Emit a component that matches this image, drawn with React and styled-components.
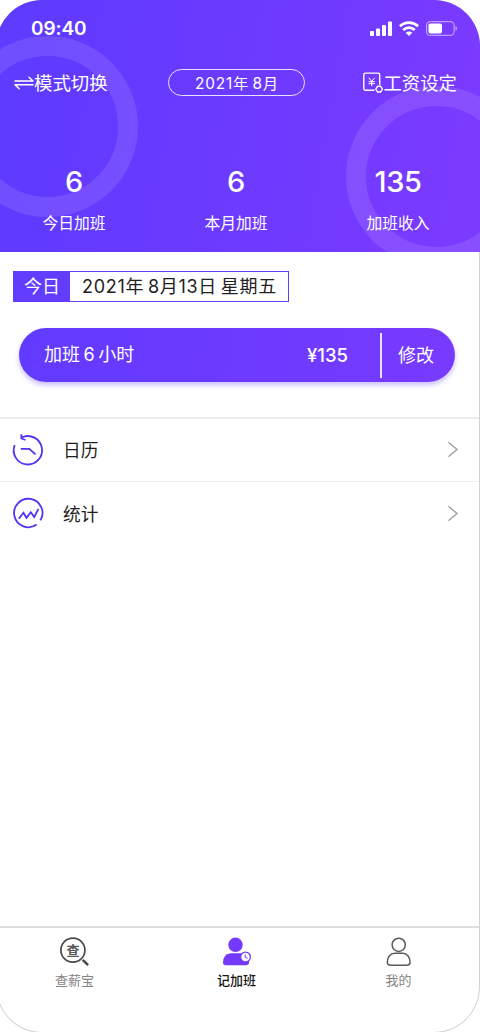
import React from "react";
import styled, { createGlobalStyle } from "styled-components";

const Global = createGlobalStyle`
  * { box-sizing: border-box; }
  body { margin: 0; background: #fff; overflow: hidden; font-family: Inter, "Noto Sans CJK SC", sans-serif; }
  svg { display: block; flex: none; overflow: visible; }
`;
const Phone = styled.main`
  width: 484px;
  height: 1033px;
  margin-left: -4px;
  padding: 0 1px 0 4px;
  border-radius: 46px;
  overflow: hidden;
  display: flex;
  flex-direction: column;
  background: #fff;
  box-shadow: inset 0 0 0 1px #d4d4d6;
`;
const Header = styled.header`
  position: relative;
  height: 252px;
  margin: 0 -1px 0 -4px;
  padding: 0 1px 0 4px;
  background: linear-gradient(100deg, #5f3aff 8%, #7a3aff 92%);
  color: #fff;
  overflow: hidden;
  flex: none;
`;
const Ring = styled.i`
  position: absolute;
  left: ${(p) => p.$x}px;
  top: ${(p) => p.$y}px;
  width: 181px;
  height: 181px;
  border: 20px solid rgba(255, 255, 255, 0.11);
  border-radius: 50%;
`;
const StatusBar = styled.div`
  position: relative;
  height: 57px;
  padding: 1px 21px 0 31px;
  display: flex;
  align-items: center;
  justify-content: space-between;
`;
const Clock = styled.span`
  font-size: 19px;
  line-height: 24px;
  font-weight: 600;
  letter-spacing: -0.1px;
`;
const Signals = styled.div`
  display: flex;
  align-items: center;
  gap: 7px;
  padding-bottom: 2px;
`;
const Tools = styled.div`
  position: relative;
  height: 51px;
  padding: 0 22px 0 14px;
  display: grid;
  grid-template-columns: 154px 137px 1fr;
  align-items: center;
`;
const Action = styled.div`
  display: flex;
  align-items: center;
  justify-content: ${(p) => (p.$end ? "flex-end" : "flex-start")};
  font-size: 18.4px;
  line-height: 26px;
  font-weight: 400;
  white-space: nowrap;
`;
const Month = styled.div`
  height: 27px;
  border: 1px solid rgba(255, 255, 255, 0.85);
  border-radius: 14px;
  display: flex;
  align-items: center;
  justify-content: center;
  padding: 0 0 1px 1px;
  font-size: 15.3px;
  letter-spacing: 0.9px;
  word-spacing: -2px;
  white-space: nowrap;
`;
const Stats = styled.div`
  position: relative;
  display: grid;
  grid-template-columns: repeat(3, 162px);
  margin-left: -7px;
  padding-top: 56px;
`;
const Stat = styled.div`
  text-align: center;
`;
const Value = styled.div`
  font-size: 29px;
  line-height: 36px;
  font-weight: 500;
  letter-spacing: -0.4px;
`;
const Label = styled.div`
  margin-top: 12px;
  font-size: 15.8px;
  line-height: 24px;
`;
const Today = styled.div`
  align-self: flex-start;
  width: 276px;
  height: 31px;
  margin: 19px 0 0 13px;
  border: 1.5px solid #623cff;
  display: flex;
  font-size: 18px;
  line-height: 30px;
  white-space: nowrap;
`;
const TodayTag = styled.span`
  width: 56px;
  background: #623cff;
  color: #fff;
  text-align: center;
`;
const TodayDate = styled.span`
  flex: 1;
  color: #222;
  padding-left: 12px;
  letter-spacing: 0.7px;
  word-spacing: -2px;
`;
const Record = styled.section`
  height: 54px;
  width: 436px;
  margin: 26px 0 35px 19px;
  border-radius: 27px;
  background: linear-gradient(100deg, #623aff, #783aff);
  box-shadow: 0 3px 5px rgba(98, 70, 255, 0.35);
  color: #fff;
  display: flex;
  align-items: center;
  font-size: 18px;
  line-height: 26px;
  white-space: nowrap;
  flex: none;
`;
const Hours = styled.span`
  width: 288px;
  padding-left: 25px;
  word-spacing: -1.5px;
`;
const Amount = styled.span`
  width: 73px;
  padding-bottom: 1px;
  font-size: 18.5px;
  font-weight: 500;
`;
const Edit = styled.span`
  height: 45px;
  border-left: 2px solid rgba(255, 255, 255, 0.85);
  padding-left: 16px;
  line-height: 45px;
`;
const Row = styled.div`
  height: 64px;
  padding: 0 21px 0 12px;
  border-top: ${(p) => (p.$first ? "2px solid #ececee" : "1px solid #eeeef0")};
  display: flex;
  align-items: center;
  flex: none;
`;
const RowTitle = styled.span`
  flex: 1;
  margin: 2px 0 0 19px;
  font-size: 17.7px;
  line-height: 26px;
  color: #1e1e1e;
`;
const TabBar = styled.nav`
  height: 107px;
  margin-top: auto;
  border-top: 2px solid #dedee0;
  display: grid;
  grid-template-columns: repeat(3, 162px);
  margin-left: -6.5px;
  flex: none;
`;
const Tab = styled.div`
  display: flex;
  flex-direction: column;
  align-items: center;
  padding-top: 8px;
  font-size: 13px;
  line-height: 20px;
  font-weight: ${(p) => (p.$active ? 500 : 400)};
  color: ${(p) => (p.$active ? "#161616" : "#858585")};
`;
const TabLabel = styled.span`
  margin-top: 2px;
`;

const stroke = { fill: "none", stroke: "currentColor", strokeLinecap: "round", strokeLinejoin: "round" };

const Signal = () => (
  <svg width="22" height="15" viewBox="0 0 22 15" fill="#fff">
    <rect x="0" y="10" width="4" height="5" rx="1" />
    <rect x="6" y="7.5" width="4" height="7.5" rx="1" />
    <rect x="12" y="4" width="4" height="11" rx="1" />
    <rect x="18" y="0.5" width="4" height="14.5" rx="1" />
  </svg>
);
const Wifi = () => (
  <svg width="20" height="15" viewBox="0 0 20 15" fill="none" stroke="#fff" strokeWidth="2.9">
    <path d="M1 5.2C6.2.4 13.8.4 19 5.2" />
    <path d="M4.2 9c3.5-3 8.1-3 11.6 0" />
    <path d="M6.7 11.7c2-1.6 4.6-1.6 6.6 0L10 15Z" fill="#fff" stroke="none" />
  </svg>
);
const Battery = () => (
  <svg width="32" height="15" viewBox="0 0 32 15">
    <rect x=".6" y=".6" width="27.5" height="13.8" rx="3.7" fill="none" stroke="#fff" strokeOpacity=".5" strokeWidth="1.2" />
    <rect x="2.5" y="2.5" width="13.5" height="10" rx="1.8" fill="#fff" />
    <path d="M29.5 5v5q1.5-.8 1.5-2.5T29.5 5Z" fill="#fff" fillOpacity=".55" />
  </svg>
);
const Swap = () => (
  <svg width="20" height="14" viewBox="0 0 20 14" {...stroke} strokeWidth="1.5">
    <path d="M1 5h18l-4-3.8M19 8.7H1l4.2 4" />
  </svg>
);
const Salary = () => (
  <svg width="21" height="22" viewBox="0 0 21 22" {...stroke} strokeWidth="1.4">
    <path d="M12 18.3H3.500q-1.700 0-1.700-1.700V2.800q0-1.700 1.700-1.700H16q1.700 0 1.700 1.700v9.800" />
    <path d="m7 6 2.700 3.400L12.400 6M9.700 9.400v4.300M6.900 9.700h5.600M6.900 11.700h5.600" strokeWidth="1" />
    <path d="M15.500 14.300h3.200l1.700 2.800-1.700 2.900h-3.200l-1.700-2.900Z" />
  </svg>
);
const History = () => (
  <svg width="32" height="32" viewBox="0 0 32 32" fill="none" stroke="#5530f5" strokeWidth="1.8">
    <path d="M9.700 3.500A14.200 14.200 0 1 1 2.700 11M9.400.2v4.300l4 1.500M8.800 14.800h8.500l6.200 5.500" />
  </svg>
);
const Chart = () => (
  <svg width="32" height="32" viewBox="0 0 32 32" fill="none" stroke="#5530f5" strokeWidth="1.8">
    <path d="M24.600 26.500A14.200 14.200 0 1 1 28.400 22.400M6.800 20.800l4.700-6 3 5 4.300-5.500 3.400 4.700 4.300-8.200" />
  </svg>
);
const Chevron = () => (
  <svg width="10" height="16" viewBox="0 0 10 16" fill="none" stroke="#999" strokeWidth="1.3">
    <path d="m.5.3 8.500 7.200-8.500 7.200" />
  </svg>
);
const SearchGlyph = styled.text`
  font: 700 13px "Noto Sans CJK SC", sans-serif;
  fill: #555;
`;
const SearchPay = () => (
  <svg width="30" height="32" viewBox="0 0 30 32" fill="none" stroke="#4a4a4a">
    <circle cx="12.9" cy="14.2" r="12" strokeWidth="1.7" />
    <path d="m22.7 23.800 5.400 5.400" strokeWidth="2.6" />
    <SearchGlyph x="12.9" y="18.500" textAnchor="middle" stroke="none">查</SearchGlyph>
  </svg>
);
const PersonClock = () => (
  <svg width="30" height="32" viewBox="0 0 30 32">
    <g fill="#7439fb">
      <circle cx="13.500" cy="8.800" r="7.2" />
      <path d="M8.500 17.300h10q8.500 2 8.500 9.200 0 2.800-3 2.800H3.800Q1 29.300 1 26.500 1 18.500 8.500 17.300Z" />
    </g>
    <circle cx="23.500" cy="21" r="4.900" fill="#fff" stroke="#7439fb" strokeWidth="1.3" />
    <path d="M23.200 18.500v2.800l2.500 1" fill="none" stroke="#7439fb" />
  </svg>
);
const Person = () => (
  <svg width="30" height="32" viewBox="0 0 30 32" fill="none" stroke="#5b5b5b" strokeWidth="1.5">
    <circle cx="14.700" cy="8.800" r="6.600" />
    <path d="M10.700 17.300h8c4.500 0 7.400 4.500 7.400 8.700 0 2.500-1 3.200-3.400 3.200h-16c-2.400 0-3.400-.7-3.400-3.200 0-4.200 2.900-8.700 7.400-8.700Z" />
  </svg>
);

const stats = [["6", "今日加班"], ["6", "本月加班"], ["135", "加班收入"]];
const rows = [["日历", History], ["统计", Chart]];
const tabs = [["查薪宝", SearchPay], ["记加班", PersonClock], ["我的", Person]];

export default function App() {
  return (
    <>
      <Global />
      <Phone>
        <Header>
          <Ring $x={-39} $y={36} />
          <Ring $x={350} $y={86} />
          <StatusBar>
            <Clock>09:40</Clock>
            <Signals><Signal /><Wifi /><Battery /></Signals>
          </StatusBar>
          <Tools>
            <Action><Swap />模式切换</Action>
            <Month>2021年 8月</Month>
            <Action $end><Salary />工资设定</Action>
          </Tools>
          <Stats>
            {stats.map(([value, label]) => (
              <Stat key={label}><Value>{value}</Value><Label>{label}</Label></Stat>
            ))}
          </Stats>
        </Header>
        <Today>
          <TodayTag>今日</TodayTag>
          <TodayDate>2021年 8月13日 星期五</TodayDate>
        </Today>
        <Record>
          <Hours>加班 6 小时</Hours>
          <Amount>¥135</Amount>
          <Edit>修改</Edit>
        </Record>
        {rows.map(([title, Icon], i) => (
          <Row key={title} $first={i === 0}><Icon /><RowTitle>{title}</RowTitle><Chevron /></Row>
        ))}
        <TabBar>
          {tabs.map(([title, Icon], i) => (
            <Tab key={title} $active={i === 1}><Icon /><TabLabel>{title}</TabLabel></Tab>
          ))}
        </TabBar>
      </Phone>
    </>
  );
}
